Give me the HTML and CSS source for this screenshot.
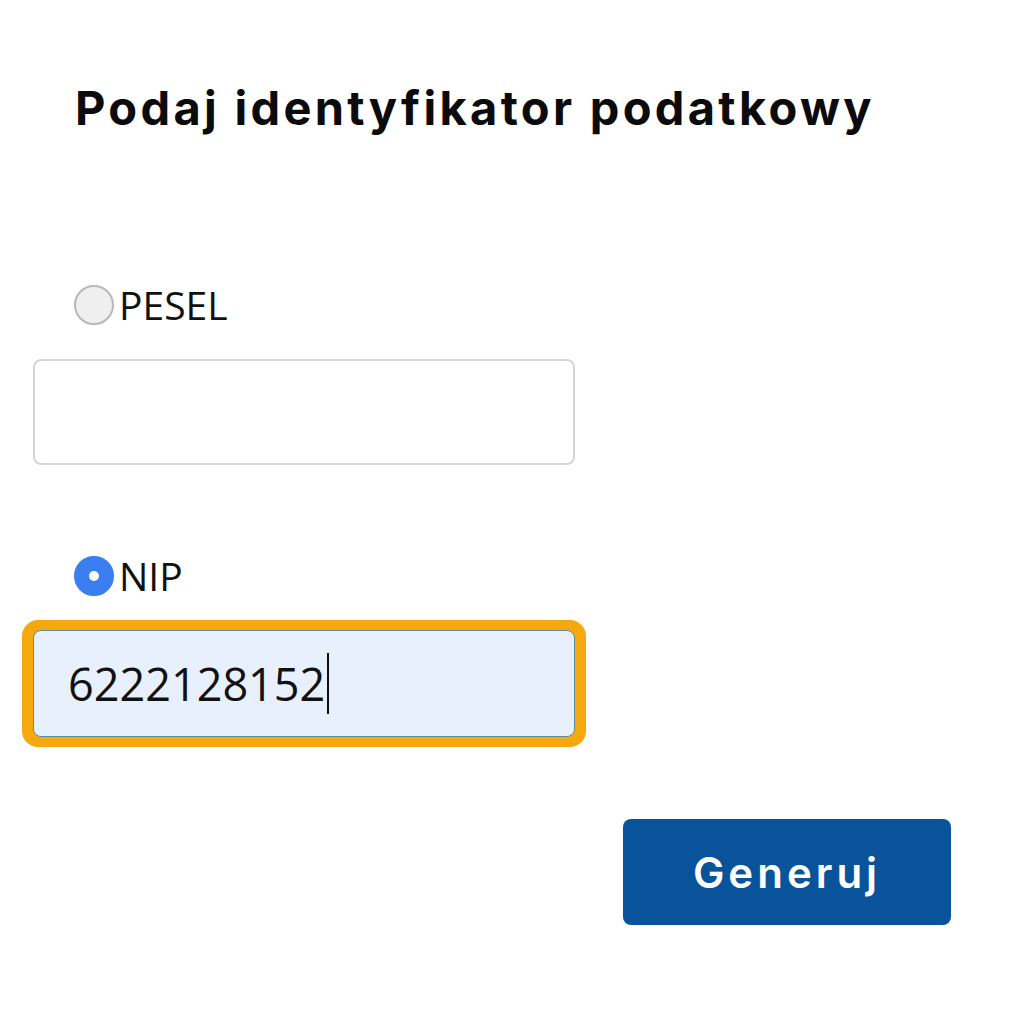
FILE: index.html
```html
<!DOCTYPE html>
<html lang="pl">
<head>
<meta charset="utf-8">
<link rel="stylesheet" href="styles.css">
</head>
<body>
<main class="page">
  <h1 class="title">Podaj identyfikator podatkowy</h1>
  <div class="field">
    <label class="option"><span class="radio"></span><span class="option-label">PESEL</span></label>
    <div class="input"></div>
  </div>
  <div class="field field-nip">
    <label class="option"><span class="radio radio-checked"></span><span class="option-label">NIP</span></label>
    <div class="focus-ring"><div class="input input-filled"><span class="value">6222128152</span><span class="caret"></span></div></div>
  </div>
  <div class="actions"><button class="btn">Generuj</button></div>
</main>
</body>
</html>
```
FILE: styles.css
```css
html, body { margin: 0; padding: 0; background: #fff; }
.page { width: 1024px; height: 1024px; display: flex; flex-direction: column; font-family: "Open Sans", "Noto Sans", sans-serif; color: #111; }
.title { margin: 0; padding: 78px 0 0 75px; font-family: "Inter", "Liberation Sans", sans-serif; font-weight: 700; font-size: 47px; line-height: 60px; letter-spacing: 3.3px; color: #0b0b0b; }
.field { display: flex; flex-direction: column; padding-left: 33px; margin-top: 144px; }
.field-nip { margin-top: 88px; }
.option { display: flex; align-items: center; padding-left: 41px; height: 46px; margin-bottom: 31px; }
.radio { width: 36px; height: 36px; border-radius: 50%; border: 2px solid #b8b8b8; background: #efefef; box-sizing: content-box; }
.radio-checked { border-color: #3b7ef0; background: #3b7ef0; position: relative; }
.radio-checked::after { content: ""; position: absolute; left: 13px; top: 13px; width: 10px; height: 10px; border-radius: 50%; background: #fff; }
.option-label { font-size: 39px; line-height: 46px; margin-left: 5px; color: #111; }
.input { width: 538px; height: 102px; border: 2px solid #d3d6da; border-radius: 8px; background: #fff; box-sizing: content-box; }
.focus-ring { margin: -10px 0 0 -11px; width: 564px; padding: 10px 10px 10px 11px; border-radius: 16px; background: #f6a90e; box-sizing: border-box; }
.input-filled { width: 542px; height: 107px; border: 1.5px solid #5b8f9a; background: #e8f0fe; border-radius: 8px; box-sizing: border-box; display: flex; align-items: center; padding-left: 34px; }
.value { font-size: 45px; color: #111; }
.caret { width: 2px; height: 61px; background: #111; margin-left: 2px; }
.actions { display: flex; justify-content: flex-start; padding-left: 623px; margin-top: 72px; }
.btn { width: 328px; height: 106px; border: none; border-radius: 8px; background: #08539a; color: #fff; font-family: "Inter", "Liberation Sans", sans-serif; font-weight: 600; font-size: 42px; letter-spacing: 4px; }
```
